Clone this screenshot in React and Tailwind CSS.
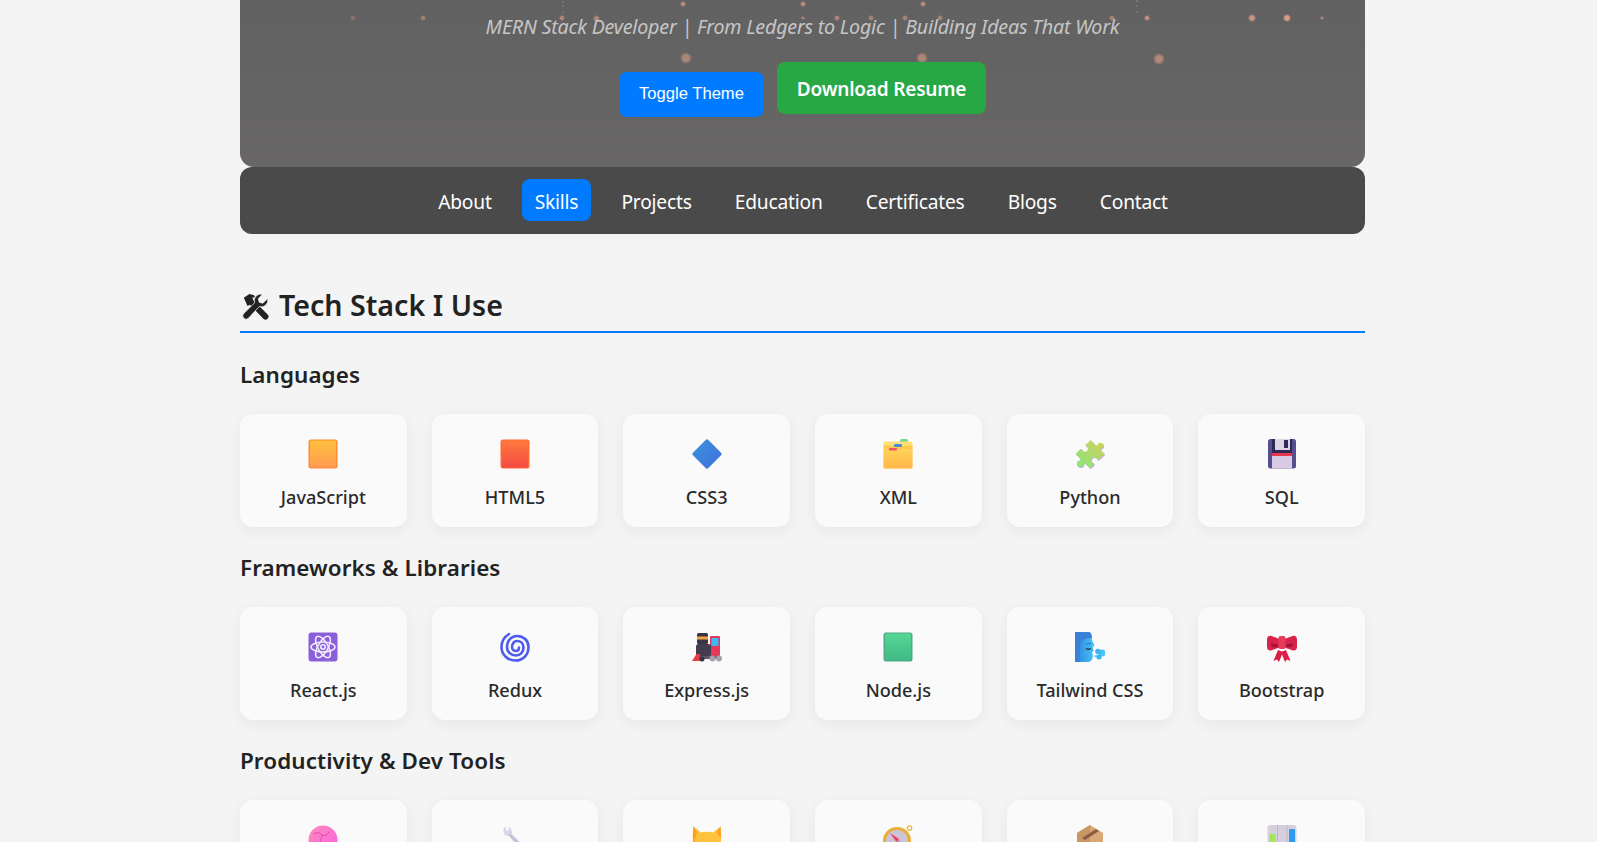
const dots = [
  [353, 18, 2, 0.2], [423, 18, 2, 0.35], [562, 18, 2, 0.45], [563, 2, 1, 0.4], [563, 6, 1, 0.35], [563, 12, 1, 0.35],
  [596, 18, 2.5, 0.45], [683, 4, 2, 0.5], [803, 4, 2, 0.5], [803, 18, 1.5, 0.4], [837, 18, 2, 0.45], [871, 18, 2, 0.4],
  [905, 18, 2, 0.4], [923, 4, 2, 0.5], [940, 18, 2, 0.4], [1112, 18, 2, 0.4], [1137, 1, 1, 0.45], [1137, 6, 1, 0.35],
  [1137, 12, 1, 0.35], [1147, 18, 2, 0.55], [1252, 18, 3, 0.6], [1287, 18, 3, 0.7], [1322, 18, 1.5, 0.45],
  [686, 58, 4.5, 0.42], [922, 58, 4.5, 0.42], [1159, 59, 4.5, 0.45],
]

function Icon({ children }) {
  return <svg viewBox="0 0 30 30" className="w-[30px] h-[30px] shrink-0">{children}</svg>
}

function Square({ id, from, to, edge }) {
  return (
    <Icon>
      <defs>
        <linearGradient id={id} x1="0" y1="0" x2="0" y2="1">
          <stop offset="0" stopColor={from} />
          <stop offset="1" stopColor={to} />
        </linearGradient>
      </defs>
      <rect x="0.5" y="0.5" width="29" height="29" rx="2.5" fill={edge} />
      <rect x="2" y="1.5" width="26" height="27" rx="1.5" fill={`url(#${id})`} />
    </Icon>
  )
}

const JsIcon = () => <Square id="js" from="#ffc13f" to="#ff9a52" edge="#ff8a30" />
const HtmlIcon = () => <Square id="html" from="#ff7a3e" to="#f34a42" edge="#ff6a35" />
const NodeIcon = () => <Square id="node" from="#55d795" to="#41b985" edge="#4fa886" />

const CssIcon = () => (
  <Icon>
    <defs>
      <linearGradient id="css" x1="0" y1="0" x2="1" y2="1">
        <stop offset="0" stopColor="#3a92dc" />
        <stop offset="1" stopColor="#4070dc" />
      </linearGradient>
    </defs>
    <path d="M13.4 1.2a2.2 2.2 0 0 1 3.2 0l12.2 12.2a2.2 2.2 0 0 1 0 3.2L16.6 28.8a2.2 2.2 0 0 1-3.2 0L1.2 16.6a2.2 2.2 0 0 1 0-3.2z" fill="url(#css)" />
  </Icon>
)

const FolderIcon = () => (
  <Icon>
    <defs>
      <linearGradient id="folder" x1="0" y1="0" x2="0" y2="1">
        <stop offset="0" stopColor="#ffd257" />
        <stop offset="1" stopColor="#ffb74a" />
      </linearGradient>
    </defs>
    <rect x="17" y="0" width="8" height="5" rx="1.5" fill="#6fd68f" />
    <rect x="0.5" y="2.5" width="29" height="27" rx="2" fill="#ffdf7a" />
    <rect x="0.5" y="6.5" width="29" height="4" fill="#ffc94c" />
    <rect x="11" y="5" width="8" height="3" rx="1" fill="#3f8fd8" />
    <rect x="0.5" y="10.5" width="29" height="19" rx="1.5" fill="url(#folder)" />
    <rect x="6" y="9" width="8" height="2.4" rx="1" fill="#f8506a" />
  </Icon>
)

const PuzzleIcon = () => (
  <Icon>
    <defs>
      <linearGradient id="puzzle" x1="0" y1="1" x2="1" y2="0">
        <stop offset="0" stopColor="#85e67a" />
        <stop offset="1" stopColor="#d4d060" />
      </linearGradient>
    </defs>
    <path d="M12 4.5 15.5 1l5 5c.6.7 1.4.6 2 0a3 3 0 1 1 3.6 3.6c-.6.6-.7 1.4 0 2L29.5 15 24 20.5c-.7.7-1.5.6-2 0a3 3 0 1 0-3.6 3.6c.6.6.7 1.4 0 2L15 29.5 10.6 25c-.6-.6-1.4-.6-2 0a3.4 3.4 0 1 1-3.6-3.6c.6-.6.6-1.4 0-2L0.5 15 5 10.5c.7-.6 1.5-.6 2 0a3 3 0 1 0 3.6-3.6c-.5-.6-.4-1.3 1.4-2.4z" fill="#c8a8ee" transform="translate(0.8 0.8)" />
    <path d="M12 4.5 15.5 1l5 5c.6.7 1.4.6 2 0a3 3 0 1 1 3.6 3.6c-.6.6-.7 1.4 0 2L29.5 15 24 20.5c-.7.7-1.5.6-2 0a3 3 0 1 0-3.6 3.6c.6.6.7 1.4 0 2L15 29.5 10.6 25c-.6-.6-1.4-.6-2 0a3.4 3.4 0 1 1-3.6-3.6c.6-.6.6-1.4 0-2L0.5 15 5 10.5c.7-.6 1.5-.6 2 0a3 3 0 1 0 3.6-3.6c-.5-.6-.4-1.3 1.4-2.4z" fill="url(#puzzle)" />
  </Icon>
)

const FloppyIcon = () => (
  <Icon>
    <rect x="1" y="0" width="28" height="29.5" rx="2.5" fill="#54508f" />
    <rect x="5" y="0" width="20" height="14" fill="#2f2a55" />
    <rect x="8" y="0" width="15" height="11" fill="#dcd6e4" />
    <rect x="17" y="1" width="4" height="8" fill="#34285a" />
    <rect x="5" y="14" width="20" height="3" fill="#e8364e" />
    <rect x="5" y="17" width="20" height="12.5" fill="#d9cbe6" />
  </Icon>
)

const ReactIcon = () => (
  <Icon>
    <rect x="0.5" y="0.5" width="29" height="29" rx="3" fill="#8a5fd9" />
    <g fill="none" stroke="#f3edff" strokeWidth="1.5">
      <ellipse cx="15" cy="15" rx="12" ry="5" />
      <ellipse cx="15" cy="15" rx="12" ry="5" transform="rotate(60 15 15)" />
      <ellipse cx="15" cy="15" rx="12" ry="5" transform="rotate(120 15 15)" />
    </g>
    <circle cx="15" cy="15" r="3" fill="#f3edff" />
    <circle cx="15" cy="15" r="1.4" fill="#8a5fd9" />
  </Icon>
)

const CycloneIcon = () => (
  <Icon>
    <path d="M9 2C4 5 1.500 10 1.500 15C1.500 23 8 28.500 15.500 28.500C23 28.500 28.500 23 28.500 15C28.500 8.500 23.500 4 17 4C11 4 7 9 7 15C7 20 11 23.500 16 23.500C20.500 23.500 23.500 20 23.500 15.500C23.500 11.500 20.500 9 17 9C14 9 12 12 12 15C12 17.500 14 19 16 19C18 19 19 17.500 19 15.500" fill="none" stroke="#4d5bf0" strokeWidth="2.600" strokeLinecap="round" />
  </Icon>
)

const TrainIcon = () => (
  <Icon>
    <rect x="5" y="1" width="11" height="11" rx="1.500" fill="#3b3444" />
    <rect x="5" y="4.500" width="11" height="3" fill="#f0a63c" />
    <rect x="18" y="4" width="10" height="20" rx="1" fill="#e5395b" />
    <rect x="19.500" y="6" width="7" height="8" rx="1" fill="#3cb8f5" />
    <rect x="4" y="12" width="15" height="13" rx="2.500" fill="#433c4f" />
    <path d="M0 29 4.500 22H8v7z" fill="#ee3a44" />
    <rect x="7" y="24" width="21" height="3" fill="#5f5866" />
    <circle cx="10" cy="27" r="2.500" fill="#3a3440" />
    <circle cx="20.500" cy="26.500" r="3" fill="#a89fad" />
    <circle cx="27" cy="26.500" r="3" fill="#a89fad" />
  </Icon>
)

const WindIcon = () => (
  <Icon>
    <defs>
      <linearGradient id="wind" x1="0" y1="0" x2="1" y2="0">
        <stop offset="0" stopColor="#2f84d8" />
        <stop offset="1" stopColor="#44c4fa" />
      </linearGradient>
    </defs>
    <path d="M0 0h13c2.500 0 3.800 2 3.800 5v3l2.700 5.500-1.800 1.500 1 3.500-1.500 1.500.5 3c.5 3.500-1.500 7-4.500 7H0z" fill="url(#wind)" />
    <path d="M5.500 0h7.500c2.500 0 3.800 2 3.800 5v1c-5 0-9 1-11 4-1 1.500-1 3-.3 5-.5 4-1.500 10-.5 15H0V0z" fill="#3a80d6" />
    <path d="M11 16.500q2.500 1.500 5 0" fill="none" stroke="#233046" strokeWidth="1.300" />
    <path d="M11 12.500q2.500-1.500 5-.8" fill="none" stroke="#2a70b8" strokeWidth="1" />
    <circle cx="27" cy="21" r="3.500" fill="#46c6f8" />
    <circle cx="23" cy="19.500" r="2.800" fill="#3bb4ee" />
    <circle cx="24" cy="25" r="2.500" fill="#3bb4ee" />
    <path d="M18 24l4-1v2.500z" fill="#46c6f8" />
  </Icon>
)

const BowIcon = () => (
  <Icon>
    <path d="M11 18 6.500 29l3.500-1.500L12 30l4-10z" fill="#d81e44" />
    <path d="M19 18 23.500 29 20 27.500 18 30l-4-10z" fill="#e01f49" />
    <path d="M12.500 7 4.500 4C1.800 3.300 0 5 0 7.500v7c0 3 1.500 4.500 4 4l8.500-3z" fill="#d92249" />
    <path d="M17.500 7l8-3c2.700-.7 4.500 1 4.500 3.500v7c0 3-1.500 4.500-4 4l-8.500-3z" fill="#d92249" />
    <path d="M11 12.500 5 11.500c-1-.2-1.500.500-1 1.500 1.500 2.500 4 3 7 2z" fill="#a0143c" />
    <path d="M19 12.500l6-1c1-.2 1.500.500 1 1.500-1.500 2.500-4 3-7 2z" fill="#a0143c" />
    <rect x="11.500" y="4" width="7" height="13" rx="2" fill="#e63a56" />
  </Icon>
)

const BallIcon = () => (
  <Icon>
    <defs>
      <linearGradient id="ball" x1="0" y1="0" x2="1" y2="1">
        <stop offset="0" stopColor="#ff8cbc" />
        <stop offset="1" stopColor="#f85fe0" />
      </linearGradient>
    </defs>
    <circle cx="15" cy="15" r="14.500" fill="url(#ball)" />
    <path d="M5 9q6-3 9 1 4 2 7-3M14 10q-2 5-1 9" fill="none" stroke="#e24cac" strokeWidth="1" />
  </Icon>
)

const WrenchIcon = () => (
  <Icon>
    <path d="M6 1.500C3 3 2.500 7 4.500 9.500c1.300 1.500 3 1.800 4.300 1.600L24 29h4l1-3.500L12 9c.5-2.500-.5-5.500-3-7L8 6l-2-.500z" fill="#ddd6e8" />
    <path d="M9.500 9.500 27.500 28" stroke="#b7adc8" strokeWidth="1.200" fill="none" />
  </Icon>
)

const CatIcon = () => (
  <Icon>
    <path d="M1.500 1.500 9 7.500q6-1.500 12 0l7.500-6c.5 5 .9 9 .5 13 0 9-6 15.500-14 15.500S1 23.500 1 14.500c-.4-4 0-8 .5-13z" fill="#ffc23c" />
    <path d="M1.500 1.500C1 6 .6 10 1 14.500c0 2 .3 3.500.8 5L5 7z" fill="#ff9e1f" />
    <path d="M28.500 1.500 25 7l3.500 6.500c.6-4 .4-8 0-12z" fill="#ff9e1f" />
  </Icon>
)

const CompassIcon = () => (
  <Icon>
    <circle cx="26.500" cy="3" r="2.200" fill="none" stroke="#f0b63a" strokeWidth="1.300" />
    <circle cx="14" cy="16" r="14" fill="#e8ae35" />
    <circle cx="14" cy="16" r="11" fill="#cdc4d6" />
    <path d="M7 8l9 6-2.500 3z" fill="#f0386b" />
    <path d="M21 24l-8-7 3-2.500z" fill="#a59cb2" />
  </Icon>
)

const BoxIcon = () => (
  <Icon>
    <path d="M15 0 28 8v22H2V8z" fill="#d8a875" />
    <path d="M15 0 2 8v22h13z" fill="#c99666" />
    <path d="M7 13 21 4l3 2-14 9z" fill="#8b5d44" />
  </Icon>
)

const ChartIcon = () => (
  <Icon>
    <rect x="0.500" y="0" width="29" height="30" rx="3" fill="#d6d0de" />
    <path d="M10.500 0v30M20 0v30" stroke="#bdb6c8" strokeWidth="1" />
    <rect x="2.500" y="9" width="6" height="21" rx="1" fill="#a4e35c" />
    <rect x="12" y="17" width="6" height="13" rx="1" fill="#d93a72" />
    <rect x="22" y="4" width="6" height="26" rx="1" fill="#2f9bf0" />
  </Icon>
)

const stacks = [
  {
    title: 'Languages',
    items: [
      ['JavaScript', JsIcon], ['HTML5', HtmlIcon], ['CSS3', CssIcon],
      ['XML', FolderIcon], ['Python', PuzzleIcon], ['SQL', FloppyIcon],
    ],
  },
  {
    title: 'Frameworks & Libraries',
    items: [
      ['React.js', ReactIcon], ['Redux', CycloneIcon], ['Express.js', TrainIcon],
      ['Node.js', NodeIcon], ['Tailwind CSS', WindIcon], ['Bootstrap', BowIcon],
    ],
  },
  {
    title: 'Productivity & Dev Tools',
    items: [
      ['', BallIcon], ['', WrenchIcon], ['', CatIcon],
      ['', CompassIcon], ['', BoxIcon], ['', ChartIcon],
    ],
  },
]

const links = ['About', 'Skills', 'Projects', 'Education', 'Certificates', 'Blogs', 'Contact']

export default function App() {
  return (
    <div className="h-screen overflow-hidden bg-[#f4f4f4] pl-[240px] text-[#222] font-['Noto_Sans',sans-serif]">
      <div className="w-[1125px]">
        <header className="relative h-[167px] rounded-b-[14px] bg-linear-to-b from-[#626161] to-[#686666] overflow-hidden">
          {dots.map(([x, y, r, o], i) => (
            <span
              key={i}
              className="absolute rounded-full bg-[radial-gradient(circle,#f2a88e_0%,#f2a88e_35%,transparent_72%)]"
              style={{ left: x - 240 - r * 1.4, top: y - r * 1.4, width: r * 2.8, height: r * 2.8, opacity: o * 1.2 }}
            />
          ))}
          <p className="relative pt-[11px] text-center text-[19.660px] leading-[31px] italic tracking-[-0.2px] text-[#c6c6c6]">
            MERN Stack Developer | From Ledgers to Logic | Building Ideas That Work
          </p>
          <div className="relative mt-[20px] flex justify-center items-start gap-[13px]">
            <button className="mt-[10px] h-[45px] w-[145px] rounded-lg bg-[#007bff] pb-[1px] text-[16.600px] text-white font-['Liberation_Sans',sans-serif]">
              Toggle Theme
            </button>
            <button className="h-[52px] w-[209px] rounded-lg bg-[#28a745] pt-[2px] text-[19px] font-semibold text-white tracking-[-0.2px]">
              Download Resume
            </button>
          </div>
        </header>

        <nav className="flex h-[67px] items-center justify-center gap-[17.500px] rounded-xl bg-[#4a4a4a] pb-[2px] pl-[1px]">
          {links.map(l => (
            <a
              key={l}
              className={`h-[42px] rounded-lg px-[12.800px] text-[19.200px] leading-[46px] tracking-[-0.200px] text-white ${l === 'Skills' ? 'bg-[#007bff]' : ''}`}
            >
              {l}
            </a>
          ))}
        </nav>

        <h2 className="mt-[48px] flex h-[51px] items-center gap-[10px] border-b-2 border-[#007bff] pb-[3px] text-[28.600px] font-semibold">
          <svg viewBox="0 0 30 30" className="ml-[1px] mt-[3px] w-[28px] h-[28px]" fill="#222">
            <path d="M3 5 9 1l5 1.500 1 2-3 .5 1.500 3L28.500 23a3 3 0 0 1-4.500 4.500L9.500 12.500 7 14z" />
            <path d="M28.500 6a7 7 0 0 1-9 8.500L8 27a3.500 3.500 0 0 1-5-5L14.500 10.500A7 7 0 0 1 23 1.500L18.500 6l1 4 4 1z" stroke="#f4f4f4" strokeWidth="0.800" />
          </svg>
          Tech Stack I Use
        </h2>

        {stacks.map(s => (
          <section key={s.title} className="mt-[26px] first-of-type:mt-[27px]">
            <h3 className="text-[22.400px] leading-[30px] font-semibold tracking-[0.1px]">{s.title}</h3>
            <div className="mt-[24px] grid grid-cols-6 gap-[25px]">
              {s.items.map(([name, Ico], i) => (
                <div
                  key={i}
                  className="flex h-[113px] flex-col items-center rounded-[12.800px] bg-[#fafafa] pt-[25px] shadow-[0_4px_15px_rgba(0,0,0,0.06)]"
                >
                  <Ico />
                  <span className="mt-[15px] text-[18.100px] leading-[26px] font-medium text-[#2a2a2a]">{name}</span>
                </div>
              ))}
            </div>
          </section>
        ))}
      </div>
    </div>
  )
}
